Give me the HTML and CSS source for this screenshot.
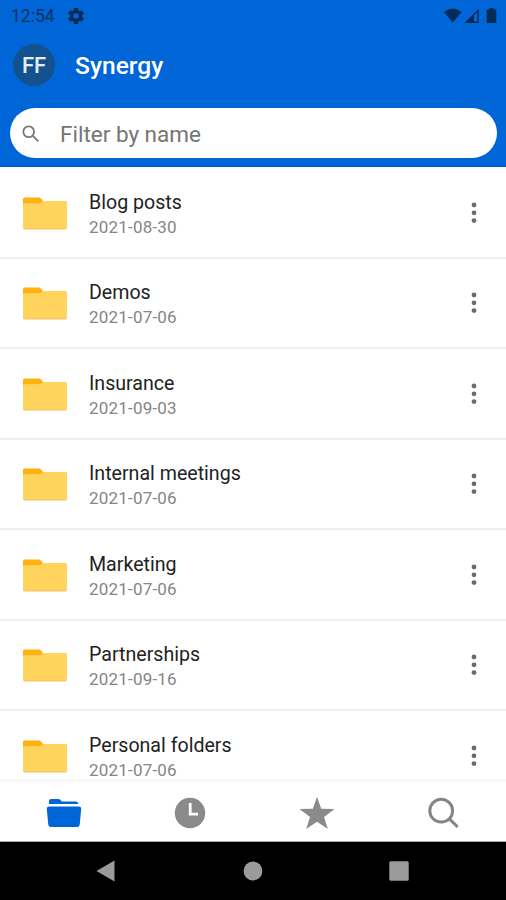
FILE: index.html
```html
<!DOCTYPE html>
<html lang="en">

<head>
    <meta charset="UTF-8">
    <meta name="viewport" content="width=device-width, initial-scale=1.0">
    <title>Synergy</title>
    <link rel="stylesheet" href="styles.css">
</head>

<body>
    <svg class="symbols">
        <symbol id="folder" viewBox="0 0 44 33">
            <path d="M0 8V2Q0 .5 1.500 .5H16Q17.500 .5 18.500 2L20 4V8z" fill="#ffb20d"/>
            <path d="M0 8Q0 6.200 2 6.200H16Q18 6.200 19 5L20 4H42Q44 4 44 6V30Q44 32.500 42 32.500H2Q0 32.500 0 30z" fill="#f3c06b"/>
            <path d="M0 8Q0 6.200 2 6.200H16Q18 6.200 19 5L20 4H42Q44 4 44 6V29.500Q44 31.500 42 31.500H2Q0 31.500 0 29.500z" fill="#ffd45c"/>
        </symbol>
        <symbol id="dots" viewBox="0 0 6 22">
            <circle cx="3" cy="3" r="2.400"/>
            <circle cx="3" cy="10.800" r="2.400"/>
            <circle cx="3" cy="18.600" r="2.400"/>
        </symbol>
    </svg>

    <div class="phone">
        <header class="header">
            <div class="status">
                <span class="time">12:54</span>
                <svg class="gear" width="16" height="16" viewBox="2 2 20 20">
                    <path d="M19.430 12.980c.04-.32.07-.64.07-.98s-.03-.66-.07-.98l2.110-1.650c.19-.15.24-.42.12-.64l-2-3.460c-.12-.22-.39-.3-.61-.22l-2.490 1c-.52-.4-1.080-.73-1.690-.98l-.38-2.650C14.460 2.180 14.250 2 14 2h-4c-.25 0-.46.18-.49.42l-.38 2.650c-.61.25-1.170.59-1.690.98l-2.490-1c-.23-.09-.49 0-.61.22l-2 3.460c-.13.22-.07.49.12.64l2.110 1.650c-.04.32-.07.65-.07.98s.03.66.07.98l-2.110 1.650c-.19.15-.24.42-.12.64l2 3.460c.12.22.39.3.61.22l2.490-1c.52.4 1.080.73 1.690.98l.38 2.650c.03.24.24.42.49.42h4c.25 0 .46-.18.49-.42l.38-2.650c.61-.25 1.170-.59 1.690-.98l2.490 1c.23.09.49 0 .61-.22l2-3.460c.12-.22.07-.49-.12-.64l-2.110-1.650zM12 15.500a3.500 3.500 0 1 1 0-7 3.500 3.500 0 0 1 0 7z"/>
                </svg>
                <svg class="signals" width="54" height="16" viewBox="0 0 54 16">
                    <path d="M0 4Q8.800-3 17.600 4L8.800 14.500z"/>
                    <path fill-rule="evenodd" d="M20.500 15L34.800 .8V15zM30 7.300V13.500H33.300V4z"/>
                    <path d="M45.500 0h4v1.500h1.800q1 0 1 1V14q0 1-1 1h-7.600q-1 0-1-1V2.500q0-1 1-1h1.800z"/>
                </svg>
            </div>
            <div class="title-bar">
                <div class="avatar">FF</div>
                <h1 class="title">Synergy</h1>
            </div>
            <div class="filter">
                <svg width="18" height="18" viewBox="0 0 18 18">
                    <circle cx="6.700" cy="6.700" r="5.400"/>
                    <path d="M10.800 10.800L16.300 16.300"/>
                </svg>
                <span class="placeholder">Filter by name</span>
            </div>
        </header>

        <main class="list">
            <div class="row">
                <svg class="folder"><use href="#folder"/></svg>
                <div class="info"><div class="name">Blog posts</div><div class="date">2021-08-30</div></div>
                <svg class="dots"><use href="#dots"/></svg>
            </div>
            <div class="row">
                <svg class="folder"><use href="#folder"/></svg>
                <div class="info"><div class="name">Demos</div><div class="date">2021-07-06</div></div>
                <svg class="dots"><use href="#dots"/></svg>
            </div>
            <div class="row">
                <svg class="folder"><use href="#folder"/></svg>
                <div class="info"><div class="name">Insurance</div><div class="date">2021-09-03</div></div>
                <svg class="dots"><use href="#dots"/></svg>
            </div>
            <div class="row">
                <svg class="folder"><use href="#folder"/></svg>
                <div class="info"><div class="name">Internal meetings</div><div class="date">2021-07-06</div></div>
                <svg class="dots"><use href="#dots"/></svg>
            </div>
            <div class="row">
                <svg class="folder"><use href="#folder"/></svg>
                <div class="info"><div class="name">Marketing</div><div class="date">2021-07-06</div></div>
                <svg class="dots"><use href="#dots"/></svg>
            </div>
            <div class="row">
                <svg class="folder"><use href="#folder"/></svg>
                <div class="info"><div class="name">Partnerships</div><div class="date">2021-09-16</div></div>
                <svg class="dots"><use href="#dots"/></svg>
            </div>
            <div class="row">
                <svg class="folder"><use href="#folder"/></svg>
                <div class="info"><div class="name">Personal folders</div><div class="date">2021-07-06</div></div>
                <svg class="dots"><use href="#dots"/></svg>
            </div>
        </main>

        <nav class="tabs">
            <div class="tab active">
                <svg width="36" height="32" viewBox="0 0 36 32">
                    <path d="M3 7V4Q3 2 5 2H12.500Q14 2 15 3.500L15.700 4.500H30.500Q32 4.500 32.300 7z"/>
                    <path d="M3 9.500H33Q35.500 9.500 35.200 12L33.800 27Q33.500 30 31 30H5Q2.500 30 2.200 27L.8 12Q.5 9.500 3 9.500z"/>
                </svg>
            </div>
            <div class="tab">
                <svg width="32" height="32" viewBox="0 0 32 32">
                    <circle cx="16" cy="16" r="15.200"/>
                    <path class="hands" d="M16.200 6V17.200H24"/>
                </svg>
            </div>
            <div class="tab">
                <svg width="36" height="34" viewBox="0 0 36 34">
                    <path d="M18 .8L22.200 12.700L35.500 12.900L25 20.900L28.800 33L18 25.800L7.200 33L11 20.900L.5 12.900L13.800 12.700z"/>
                </svg>
            </div>
            <div class="tab">
                <svg class="search" width="32" height="32" viewBox="0 0 32 32">
                    <circle cx="14.200" cy="13.700" r="11.400"/>
                    <path d="M22.400 21.900L30.700 30"/>
                </svg>
            </div>
        </nav>

        <footer class="system">
            <svg width="20" height="22" viewBox="0 0 20 22"><path d="M.5 11L18.500 .5V21.500z"/></svg>
            <svg width="20" height="20" viewBox="0 0 20 20"><circle cx="10" cy="10" r="9.400"/></svg>
            <svg width="20" height="20" viewBox="0 0 20 20"><rect x=".3" y=".3" width="19.400" height="19.400" rx="1.500"/></svg>
        </footer>
    </div>
</body>

</html>
```

FILE: styles.css
```css
* {
    box-sizing: border-box;
}
body {
    margin: 0;
    font-family: Roboto, sans-serif;
    background-color: white;
}
svg {
    display: block;
    flex-shrink: 0;
}
.symbols {
    display: none;
}
.phone {
    width: 506px;
    height: 900px;
    display: flex;
    flex-direction: column;
    overflow: hidden;
}
.header {
    height: 167px;
    flex-shrink: 0;
    background-color: #0065d6;
    border-bottom: 1px solid #0057be;
}
.status {
    height: 32px;
    padding: 0 8px 0 11px;
    display: flex;
    align-items: center;
    color: #083363;
    fill: #052b57;
}
.time {
    width: 57px;
    font-size: 17.5px;
}
.signals {
    margin-left: auto;
}
.title-bar {
    height: 66px;
    padding-left: 13px;
    display: flex;
    align-items: center;
}
.avatar {
    width: 42px;
    height: 42px;
    margin-top: -1px;
    border-radius: 50%;
    background-color: #13518f;
    color: #e6ebf6;
    font-size: 22px;
    font-weight: 500;
    line-height: 43px;
    text-align: center;
}
.title {
    margin: 1px 0 0 20px;
    font-size: 24.6px;
    font-weight: 500;
    color: white;
}
.filter {
    height: 50px;
    margin: 10px 9px 0 10px;
    padding-left: 12px;
    border-radius: 25px;
    background-color: white;
    display: flex;
    align-items: center;
    gap: 20px;
}
.filter svg {
    margin-top: 1px;
    fill: none;
    stroke: #777;
    stroke-width: 1.8;
}
.placeholder {
    padding-top: 2px;
    font-size: 22.5px;
    color: #757575;
}
.list {
    height: 612px;
    flex-shrink: 0;
    padding-top: 1px;
    overflow: hidden;
}
.row {
    height: 90.5px;
    padding: 0 29px 0 23px;
    border-bottom: 2px solid #eee;
    display: flex;
    align-items: center;
}
.folder {
    width: 44px;
    height: 33px;
    margin-top: 2px;
}
.info {
    flex: 1;
    margin-left: 22px;
    padding-top: 3px;
}
.name {
    font-size: 19.6px;
    line-height: 28px;
    color: #222;
}
.date {
    padding-bottom: 2px;
    font-size: 17px;
    line-height: 20px;
    color: #858585;
    letter-spacing: 0.2px;
}
.dots {
    width: 6px;
    height: 22px;
    margin-top: 1px;
    fill: #6b6b6b;
}
.tabs {
    height: 63px;
    flex-shrink: 0;
    padding-left: 1px;
    border-top: 3px solid #f8f8f8;
    border-bottom: 1px solid #aaa;
    background-color: white;
    display: grid;
    grid-template-columns: repeat(4, 1fr);
}
.tab {
    display: flex;
    align-items: center;
    justify-content: center;
    padding-top: 2px;
    fill: #8a8a8a;
}
.active {
    fill: #0065d6;
}
.hands {
    fill: none;
    stroke: white;
    stroke-width: 2.8;
}
.search {
    fill: none;
    stroke: #858585;
    stroke-width: 3;
}
.system {
    flex: 1;
    padding: 0 97px 0 96px;
    background-color: black;
    display: flex;
    align-items: center;
    justify-content: space-between;
    fill: #9b9b9b;
}
```
